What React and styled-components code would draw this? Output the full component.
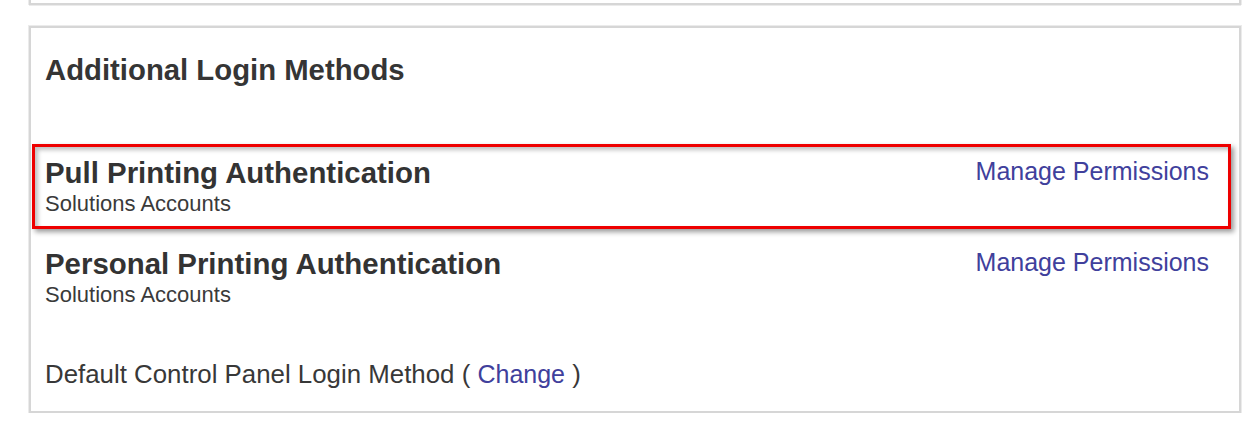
import React from "react";
import styled, { createGlobalStyle } from "styled-components";

const Global = createGlobalStyle`
  html, body { margin: 0; padding: 0; background: #ffffff; }
  body { font-family: "Liberation Sans", Arial, sans-serif; color: #333333; }
`;

const Page = styled.div`
  padding: 0 19px 0 29px;
  width: 1260px;
  box-sizing: border-box;
`;

const TopPanel = styled.div`
  height: 3px;
  border: 2px solid #d6d6d6;
  border-top: none;
  box-shadow: 0 1px 0 #ebebeb, 1px 0 0 #ebebeb, -1px 0 0 #ebebeb;
`;

const Panel = styled.section`
  margin-top: 21px;
  border: 2px solid #d6d6d6;
  box-shadow: 0 0 0 1px #ebebeb;
  padding: 25px 8px 22px 1px;
  background: #fff;
`;

const Heading = styled.h2`
  margin: 0 0 57px;
  padding-left: 13px;
  font-size: 29.3px;
  line-height: 34px;
  font-weight: bold;
  color: #353535;
`;

const Rows = styled.div`
  display: flex;
  flex-direction: column;
  gap: 6px;
`;

const Row = styled.div`
  display: flex;
  justify-content: space-between;
  align-items: flex-start;
  border: 3px solid ${(p) => (p.$highlight ? "#ee0000" : "transparent")};
  padding: 9px 19px 9px 10px;
  box-shadow: ${(p) =>
    p.$highlight
      ? "3px 3px 5px rgba(0,0,0,0.4), inset 3px 3px 4px rgba(0,0,0,0.25)"
      : "none"};
`;

const Info = styled.div`
  display: flex;
  flex-direction: column;
`;

const Title = styled.div`
  font-size: 29.4px;
  line-height: 34px;
  font-weight: bold;
  color: #333;
`;

const Sub = styled.div`
  font-size: 22px;
  line-height: 27px;
  color: #3a3a3a;
`;

const Link = styled.a`
  font-size: 25px;
  line-height: 30px;
  color: #40409c;
  text-decoration: none;
  cursor: pointer;
`;

const Footer = styled.div`
  margin-top: 39px;
  padding-left: 13px;
  font-size: 25.85px;
  line-height: 30px;
  color: #383838;
`;

const methods = [
  { title: "Pull Printing Authentication", sub: "Solutions Accounts", highlight: true },
  { title: "Personal Printing Authentication", sub: "Solutions Accounts", highlight: false },
];

export default function App() {
  return (
    <>
      <Global />
      <Page>
        <TopPanel />
        <Panel>
          <Heading>Additional Login Methods</Heading>
          <Rows>
            {methods.map((m) => (
              <Row key={m.title} $highlight={m.highlight}>
                <Info>
                  <Title>{m.title}</Title>
                  <Sub>{m.sub}</Sub>
                </Info>
                <Link>Manage Permissions</Link>
              </Row>
            ))}
          </Rows>
          <Footer>
            Default Control Panel Login Method ( <Link as="span">Change</Link> )
          </Footer>
        </Panel>
      </Page>
    </>
  );
}
